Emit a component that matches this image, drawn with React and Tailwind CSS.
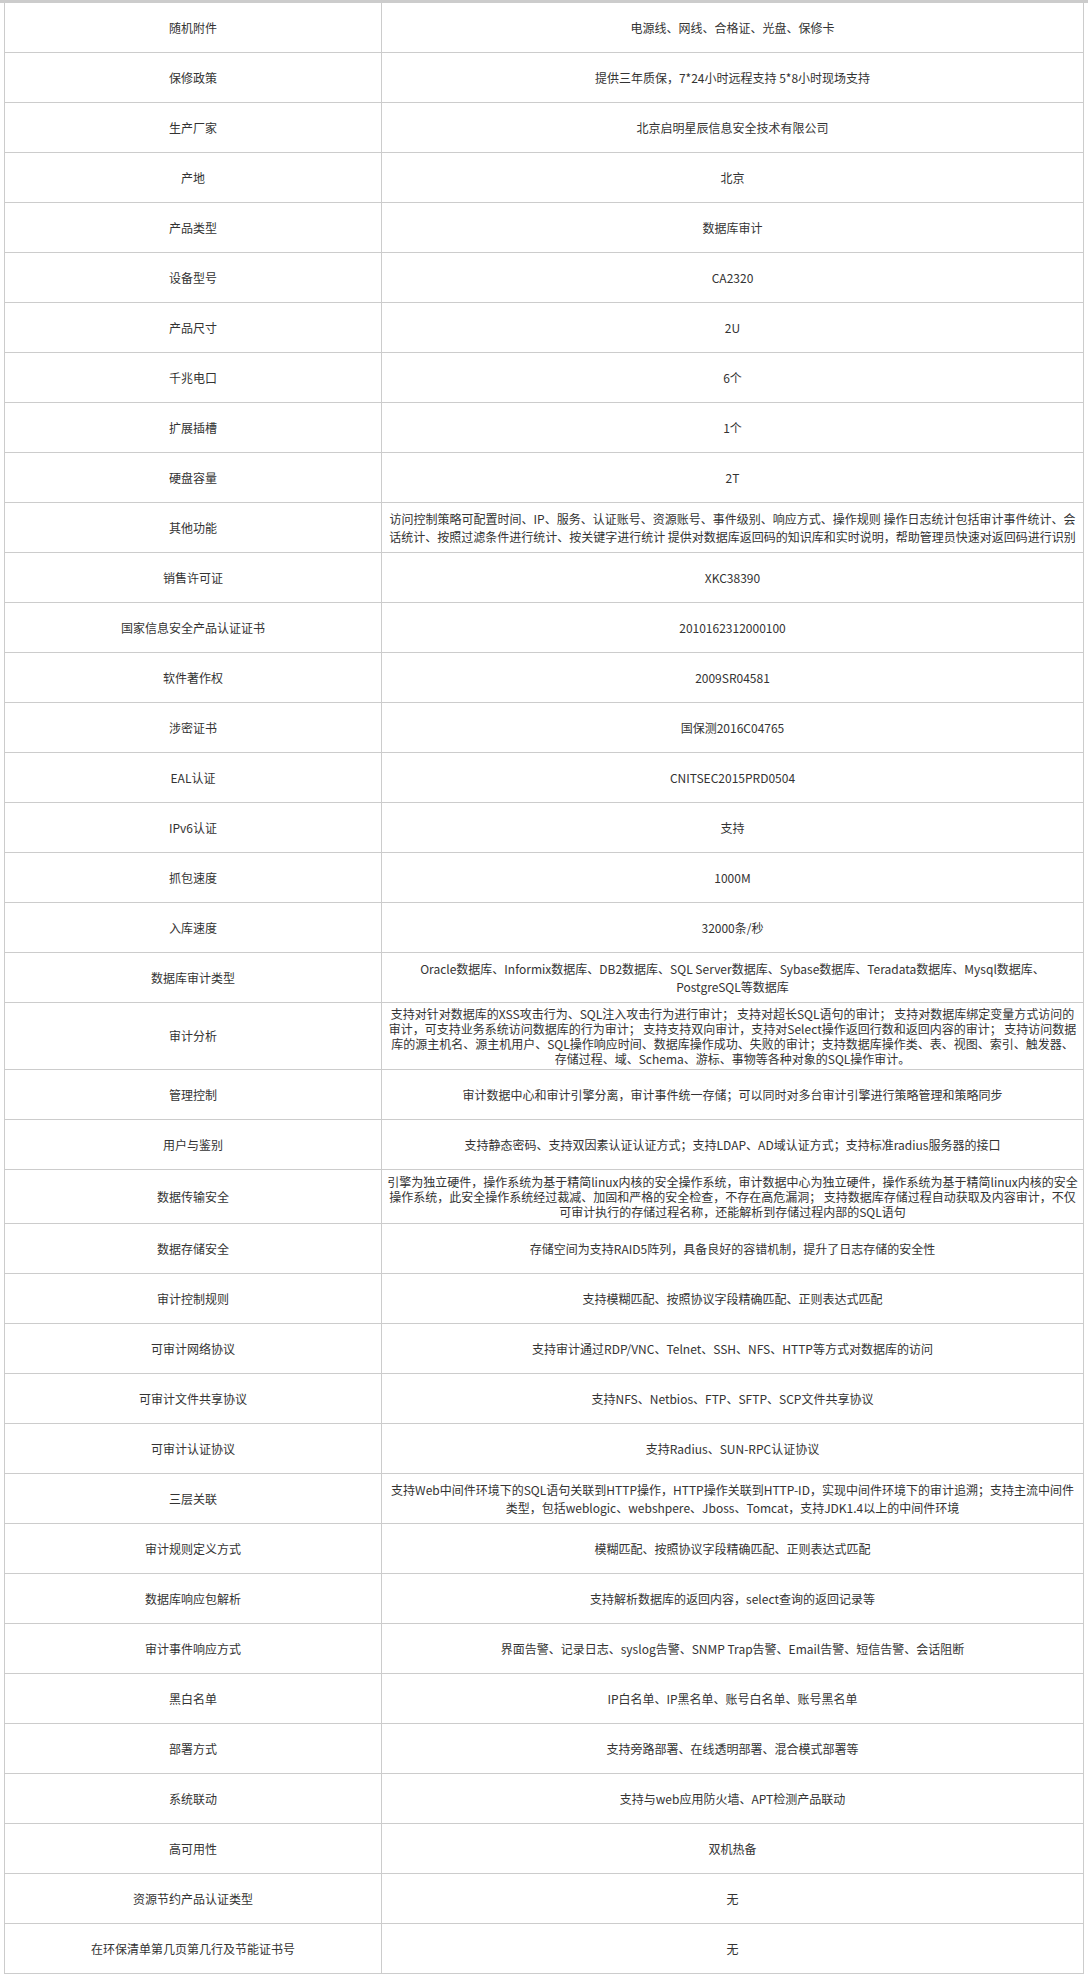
const rows = [
  ["随机附件", ["电源线、网线、合格证、光盘、保修卡"]],
  ["保修政策", ["提供三年质保，7*24小时远程支持 5*8小时现场支持"]],
  ["生产厂家", ["北京启明星辰信息安全技术有限公司"]],
  ["产地", ["北京"]],
  ["产品类型", ["数据库审计"]],
  ["设备型号", ["CA2320"]],
  ["产品尺寸", ["2U"]],
  ["千兆电口", ["6个"]],
  ["扩展插槽", ["1个"]],
  ["硬盘容量", ["2T"]],
  [
    "其他功能",
    [
      "访问控制策略可配置时间、IP、服务、认证账号、资源账号、事件级别、响应方式、操作规则 操作日志统计包括审计事件统计、会",
      "话统计、按照过滤条件进行统计、按关键字进行统计 提供对数据库返回码的知识库和实时说明，帮助管理员快速对返回码进行识别",
    ],
    "loose",
  ],
  ["销售许可证", ["XKC38390"]],
  ["国家信息安全产品认证证书", ["2010162312000100"]],
  ["软件著作权", ["2009SR04581"]],
  ["涉密证书", ["国保测2016C04765"]],
  ["EAL认证", ["CNITSEC2015PRD0504"]],
  ["IPv6认证", ["支持"]],
  ["抓包速度", ["1000M"]],
  ["入库速度", ["32000条/秒"]],
  [
    "数据库审计类型",
    [
      "Oracle数据库、Informix数据库、DB2数据库、SQL Server数据库、Sybase数据库、Teradata数据库、Mysql数据库、",
      "PostgreSQL等数据库",
    ],
    "loose",
  ],
  [
    "审计分析",
    [
      "支持对针对数据库的XSS攻击行为、SQL注入攻击行为进行审计； 支持对超长SQL语句的审计； 支持对数据库绑定变量方式访问的",
      "审计，可支持业务系统访问数据库的行为审计； 支持支持双向审计，支持对Select操作返回行数和返回内容的审计； 支持访问数据",
      "库的源主机名、源主机用户、SQL操作响应时间、数据库操作成功、失败的审计；支持数据库操作类、表、视图、索引、触发器、",
      "存储过程、域、Schema、游标、事物等各种对象的SQL操作审计。",
    ],
    "tall4",
  ],
  ["管理控制", ["审计数据中心和审计引擎分离，审计事件统一存储；可以同时对多台审计引擎进行策略管理和策略同步"]],
  ["用户与鉴别", ["支持静态密码、支持双因素认证认证方式；支持LDAP、AD域认证方式；支持标准radius服务器的接口"]],
  [
    "数据传输安全",
    [
      "引擎为独立硬件，操作系统为基于精简linux内核的安全操作系统，审计数据中心为独立硬件，操作系统为基于精简linux内核的安全",
      "操作系统，此安全操作系统经过裁减、加固和严格的安全检查，不存在高危漏洞； 支持数据库存储过程自动获取及内容审计，不仅",
      "可审计执行的存储过程名称，还能解析到存储过程内部的SQL语句",
    ],
    "tall3",
  ],
  ["数据存储安全", ["存储空间为支持RAID5阵列，具备良好的容错机制，提升了日志存储的安全性"]],
  ["审计控制规则", ["支持模糊匹配、按照协议字段精确匹配、正则表达式匹配"]],
  ["可审计网络协议", ["支持审计通过RDP/VNC、Telnet、SSH、NFS、HTTP等方式对数据库的访问"]],
  ["可审计文件共享协议", ["支持NFS、Netbios、FTP、SFTP、SCP文件共享协议"]],
  ["可审计认证协议", ["支持Radius、SUN-RPC认证协议"]],
  [
    "三层关联",
    [
      "支持Web中间件环境下的SQL语句关联到HTTP操作，HTTP操作关联到HTTP-ID，实现中间件环境下的审计追溯；支持主流中间件",
      "类型，包括weblogic、webshpere、Jboss、Tomcat，支持JDK1.4以上的中间件环境",
    ],
    "loose",
  ],
  ["审计规则定义方式", ["模糊匹配、按照协议字段精确匹配、正则表达式匹配"]],
  ["数据库响应包解析", ["支持解析数据库的返回内容，select查询的返回记录等"]],
  ["审计事件响应方式", ["界面告警、记录日志、syslog告警、SNMP Trap告警、Email告警、短信告警、会话阻断"]],
  ["黑白名单", ["IP白名单、IP黑名单、账号白名单、账号黑名单"]],
  ["部署方式", ["支持旁路部署、在线透明部署、混合模式部署等"]],
  ["系统联动", ["支持与web应用防火墙、APT检测产品联动"]],
  ["高可用性", ["双机热备"]],
  ["资源节约产品认证类型", ["无"]],
  ["在环保清单第几页第几行及节能证书号", ["无"]],
];

function SpecRow({ label, lines, kind }) {
  const height =
    kind === "tall4" ? "h-[67px]" : kind === "tall3" ? "h-[54px]" : "h-[50px]";
  const leading = kind === "loose" ? "leading-[18px]" : "leading-[15px]";

  return (
    <div className={`flex ${height} border-b border-[#cccccc]`}>
      <div className="w-[377px] shrink-0 flex items-center justify-center border-r border-[#cccccc]">
        {label}
      </div>
      <div className={`flex-1 flex flex-col items-center justify-center px-[2px] ${leading}`}>
        {lines.map((line, i) => (
          <div key={i} className="whitespace-nowrap">
            {line}
          </div>
        ))}
      </div>
    </div>
  );
}

export default function App() {
  return (
    <div
      className="w-[1088px] bg-white text-[12px] text-[#333333]"
      style={{ fontFamily: '"Noto Sans CJK SC", "Microsoft YaHei", sans-serif' }}
    >
      <div className="h-[3px] bg-[#cccccc]" />
      <div className="ml-[4px] w-[1080px] border-l border-r border-[#cccccc]">
        {rows.map(([label, lines, kind]) => (
          <SpecRow key={label} label={label} lines={lines} kind={kind} />
        ))}
      </div>
    </div>
  );
}
